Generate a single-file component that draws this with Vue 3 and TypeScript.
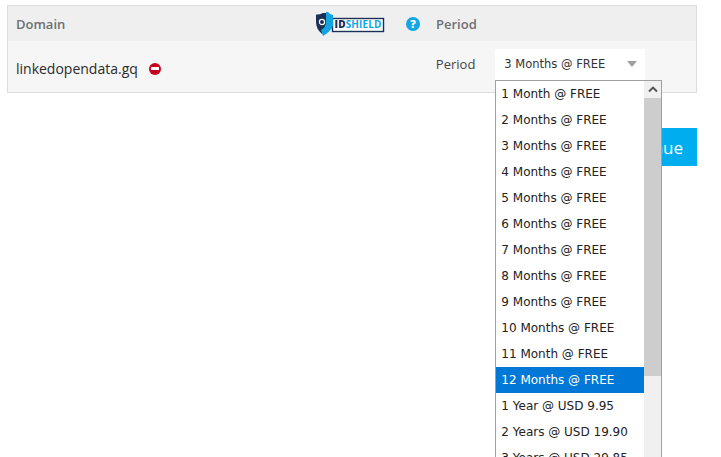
<script setup lang="ts">
const options = [
  '1 Month @ FREE',
  '2 Months @ FREE',
  '3 Months @ FREE',
  '4 Months @ FREE',
  '5 Months @ FREE',
  '6 Months @ FREE',
  '7 Months @ FREE',
  '8 Months @ FREE',
  '9 Months @ FREE',
  '10 Months @ FREE',
  '11 Month @ FREE',
  '12 Months @ FREE',
  '1 Year @ USD 9.95',
  '2 Years @ USD 19.90',
  '3 Years @ USD 29.85',
];
const activeOption = '12 Months @ FREE';
</script>

<template>
  <div class="page">
    <div class="table">
      <div class="table__head">
        <span class="col-domain">Domain</span>
        <span class="idshield">
          <svg width="70" height="24" viewBox="0 0 70 24" aria-hidden="true">
            <rect x="17.5" y="6.5" width="51" height="13" fill="#fff" stroke="#1b2f57" stroke-width="1.4" />
            <path d="M1 2.5 Q4 3 8 1 H11 V20 L7 22 Q1 17 1 10 Z" fill="#1b2f57" />
            <path d="M11 0 H13 Q15 3 18 3 V14 Q15 20 8 24 L6 18 Q11 15 11 10 Z" fill="#12a5e0" />
            <circle cx="7" cy="10" r="2.6" fill="none" stroke="#fff" stroke-width="1.2" />
          </svg>
          <span class="idshield__text"><b>ID</b>SHIELD</span>
        </span>
        <span class="help">?</span>
        <span class="col-period">Period</span>
      </div>
      <div class="table__row">
        <span class="domain">linkedopendata.gq</span>
        <span class="remove"></span>
        <span class="period-label">Period</span>
        <div class="select">
          <span>3 Months @ FREE</span>
          <i class="select__arrow"></i>
          <div class="dropdown">
            <ul class="dropdown__list">
              <li v-for="opt in options" :key="opt" :class="{ active: opt === activeOption }">{{ opt }}</li>
            </ul>
            <div class="scrollbar">
              <div class="scrollbar__btn">
                <svg width="10" height="7" viewBox="0 0 10 7" aria-hidden="true">
                  <path d="M1 5.5 L5 1.5 L9 5.5" fill="none" stroke="#505050" stroke-width="1.8" />
                </svg>
              </div>
              <div class="scrollbar__thumb"></div>
            </div>
          </div>
        </div>
      </div>
    </div>
    <div class="actions">
      <button type="button" class="continue">Continue</button>
    </div>
  </div>
</template>

<style>
html,
body {
  margin: 0;
  background: #fff;
  overflow: hidden;
}
</style>

<style scoped>
.page {
  width: 721px;
  height: 457px;
  overflow: hidden;
  box-sizing: border-box;
  padding: 5px 24px 0 7px;
  font-family: 'Open Sans', sans-serif;
}

.table {
  border: 1px solid #ddd;
  background: #f6f6f6;
}

.table__head {
  display: flex;
  align-items: center;
  height: 35px;
  background: #efefef;
  font-size: 13px;
  font-weight: 600;
  color: #6c6f73;
}

.col-domain {
  margin-left: 8px;
  width: 299px;
}

.idshield {
  position: relative;
  display: block;
  width: 70px;
  height: 24px;
}

.idshield__text {
  position: absolute;
  left: 19.5px;
  top: 5px;
  font-size: 10px;
  line-height: 15px;
  font-weight: 700;
  letter-spacing: 0.15px;
  color: #12a5e0;
}

.idshield__text b {
  color: #1b2f57;
}

.help {
  width: 14px;
  height: 14px;
  margin-left: 21px;
  border-radius: 50%;
  background: #12a5e8;
  color: #fff;
  font-size: 11px;
  font-weight: 800;
  line-height: 14px;
  text-align: center;
}

.col-period {
  margin-left: 16px;
}

.table__row {
  display: flex;
  align-items: center;
  height: 51px;
  color: #333;
}

.domain {
  margin-left: 8px;
  margin-top: 4px;
  font-size: 14px;
  color: #2b2b2b;
}

.remove {
  position: relative;
  width: 12px;
  height: 12px;
  margin-left: 11px;
  margin-top: 4px;
  border-radius: 50%;
  background: #c8001e;
}

.remove::after {
  content: '';
  position: absolute;
  left: 2px;
  top: 4.5px;
  width: 8px;
  height: 3px;
  background: #fff;
}

.period-label {
  margin-left: 275px;
  margin-top: -6px;
  font-size: 13px;
  color: #444;
}

.select {
  position: relative;
  display: flex;
  align-items: center;
  justify-content: space-between;
  box-sizing: border-box;
  width: 150px;
  height: 31px;
  margin-left: 20px;
  margin-top: -5px;
  padding: 0 8px 0 9px;
  background: #fff;
  font-family: 'DejaVu Sans', sans-serif;
  font-size: 11.5px;
  color: #333;
}

.select__arrow {
  width: 0;
  height: 0;
  border-left: 5.5px solid transparent;
  border-right: 5.5px solid transparent;
  border-top: 6px solid #a0a0a0;
}

.dropdown {
  position: absolute;
  left: 0;
  top: 31px;
  display: flex;
  box-sizing: border-box;
  width: 167px;
  height: 400px;
  border: 1px solid #a0a0a0;
  background: #fff;
  overflow: hidden;
  font-size: 12px;
}

.dropdown__list {
  flex: 1;
  margin: 0;
  padding: 0;
  list-style: none;
}

.dropdown__list li {
  height: 26px;
  padding-left: 5px;
  line-height: 26px;
  color: #222;
  white-space: nowrap;
}

.dropdown__list li.active {
  background: #0078d7;
  color: #fff;
}

.scrollbar {
  width: 17px;
  background: #f0f0f0;
}

.scrollbar__btn {
  display: flex;
  align-items: center;
  justify-content: center;
  height: 17px;
}

.scrollbar__thumb {
  height: 278px;
  background: #cdcdcd;
}

.actions {
  display: flex;
  justify-content: flex-end;
  margin-top: 35px;
}

.continue {
  width: 100px;
  height: 38px;
  border: 0;
  padding: 0;
  background: #00aeef;
  color: #fff;
  font-family: 'Open Sans', sans-serif;
  font-size: 17px;
}
</style>
